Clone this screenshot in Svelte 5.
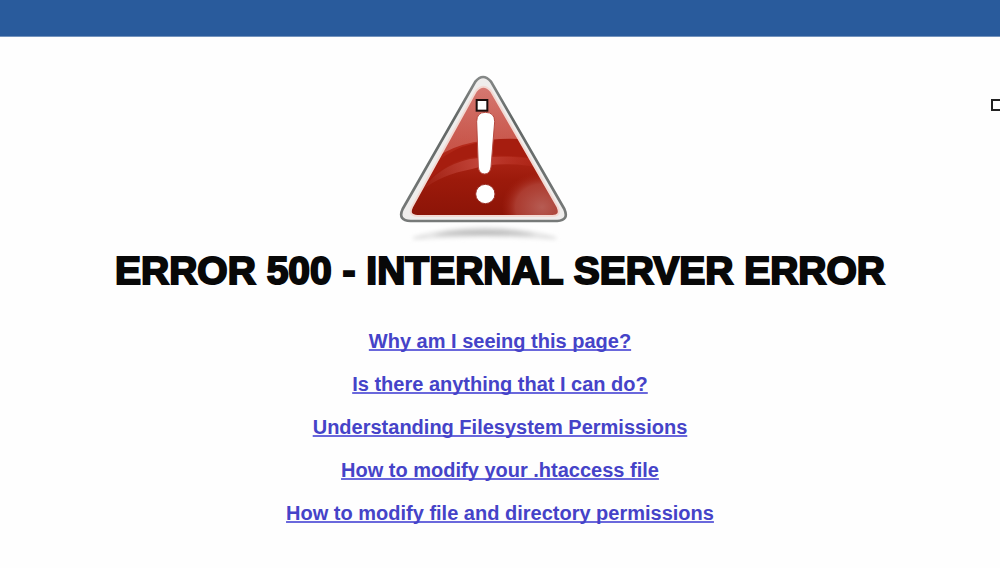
<script lang="ts">
  // Static 500 error page: top strip, warning sign, title and help links.

  interface HelpLink {
    label: string;
    href: string;
  }

  const links: HelpLink[] = [
    { label: 'Why am I seeing this page?', href: '#why' },
    { label: 'Is there anything that I can do?', href: '#what-can-i-do' },
    { label: 'Understanding Filesystem Permissions', href: '#permissions' },
    { label: 'How to modify your .htaccess file', href: '#htaccess' },
    { label: 'How to modify file and directory permissions', href: '#modify-permissions' },
  ];

  // outline of the red face, shared by the fill, the clip and the border
  const face = 'M258 78Q280 52 303 78L503 426Q514 453 488 453H82Q54 452 66 426Z';
</script>

<header></header>

<main>
  <!-- the sign sits slightly left of the middle of its box -->
  <svg class="sign" viewBox="0 0 660 555" role="img" aria-label="Warning">
    <defs>
      <linearGradient id="red" x1="0" y1="0" x2="0" y2="1">
        <stop offset="0" stop-color="#cf6760" />
        <stop offset="0.45" stop-color="#b52a1b" />
        <stop offset="0.72" stop-color="#9c1a0b" />
        <stop offset="1" stop-color="#8c1407" />
      </linearGradient>
      <linearGradient id="gloss" x1="0" y1="0" x2="0" y2="1">
        <stop offset="0" stop-color="#e39a94" stop-opacity="0.35" />
        <stop offset="1" stop-color="#d4695f" stop-opacity="0.65" />
      </linearGradient>
      <linearGradient id="arc" x1="0" y1="0" x2="1" y2="0">
        <stop offset="0" stop-color="#b94238" stop-opacity="0.1" />
        <stop offset="0.45" stop-color="#c4473c" stop-opacity="0.9" />
        <stop offset="1" stop-color="#b8281a" stop-opacity="0.2" />
      </linearGradient>
      <linearGradient id="rim" x1="0" y1="0" x2="0" y2="1">
        <stop offset="0" stop-color="#858887" />
        <stop offset="0.3" stop-color="#626766" />
        <stop offset="1" stop-color="#777a79" />
      </linearGradient>
      <radialGradient id="glow">
        <stop offset="0" stop-color="#bd6860" stop-opacity="0.85" />
        <stop offset="0.65" stop-color="#b3473c" stop-opacity="0.75" />
        <stop offset="1" stop-color="#a82213" stop-opacity="0" />
      </radialGradient>
      <radialGradient id="shadow">
        <stop offset="0" stop-color="#b4b4b4" />
        <stop offset="0.7" stop-color="#cdcdcd" />
        <stop offset="1" stop-color="#fff" stop-opacity="0" />
      </radialGradient>
      <filter id="soft" x="-10%" y="-60%" width="120%" height="220%">
        <feGaussianBlur stdDeviation="6" />
      </filter>
      <clipPath id="face">
        <path d={face} />
      </clipPath>
    </defs>

    <path d="M70 520Q280 460 498 520Q280 504 70 520Z" fill="url(#shadow)" stroke="#dcdcdc" stroke-width="6" filter="url(#soft)" />
    <path
      d="M256 50Q279 22 303 50L523 432Q538 466 502 468H62Q22 466 38 432Z"
      fill="#efedec"
      stroke="url(#rim)"
      stroke-width="8"
      stroke-linejoin="round"
    />
    <path d={face} fill="url(#red)" />
    <g clip-path="url(#face)">
      <path d="M40 400Q100 262 250 232Q340 214 440 232V40H40Z" fill="url(#gloss)" />
      <path d="M60 420Q130 298 246 277Q340 262 480 288V232Q340 208 250 236Q130 262 60 400Z" fill="#a61d0f" />
      <path d="M96 376Q144 304 240 282Q340 266 470 286V310Q330 284 246 312Q150 330 96 376Z" fill="url(#arc)" />
      <ellipse cx="456" cy="426" rx="122" ry="106" fill="url(#glow)" />
    </g>
    <path d={face} fill="none" stroke="#f3d9d3" stroke-width="6" />
    <path
      d="M260 170Q260 142 286 142Q314 142 314 170L303 306Q300 327 284 327Q267 327 265 306Z"
      fill="#fff"
      stroke="#b64a40"
      stroke-width="3"
    />
    <circle cx="286" cy="387" r="29" fill="#fff" stroke="#9c3027" stroke-width="3" />
    <rect x="260" y="105" width="32" height="32" fill="#fff" stroke="#1c0d0c" stroke-width="6" />
  </svg>

  <h1>ERROR 500 - INTERNAL SERVER ERROR</h1>

  <ul>
    {#each links as link}
      <li><a href={link.href}>{link.label}</a></li>
    {/each}
  </ul>

  <span class="handle"></span>
</main>

<style>
  :global(body) {
    background: #fefefe;
    font-family: Arial, "Liberation Sans", sans-serif;
  }
  header {
    height: 36px;
    background: #295b9c;
    border-bottom: 1px solid #7393bd;
  }
  main {
    position: relative;
    display: flex;
    flex-direction: column;
    align-items: center;
    padding: 28px 0 32px;
    overflow: hidden;
  }
  .sign {
    display: block;
    width: 220px;
    height: 185px;
  }
  h1 {
    margin: 0;
    font-size: 39px;
    line-height: 42px;
    font-weight: 900;
    color: #080808;
    -webkit-text-stroke: 2px #080808;
    text-align: center;
  }
  ul {
    display: flex;
    flex-direction: column;
    align-items: center;
    gap: 19px;
    margin: 37px 0 0;
    padding: 0;
    list-style: none;
  }
  li {
    font-size: 20px;
    line-height: 24px;
    font-weight: 700;
    text-align: center;
  }
  a {
    color: #4543c8;
    text-decoration: underline;
    text-decoration-color: #6a68dc;
    text-decoration-thickness: 2px;
    text-underline-offset: 1px;
    text-decoration-skip-ink: none;
  }
  /* edge handle, cut off by the right side of the window */
  .handle {
    position: absolute;
    top: 62px;
    right: -3px;
    box-sizing: border-box;
    width: 12px;
    height: 12px;
    border: 2px solid #222;
    background: #fff;
  }
</style>
